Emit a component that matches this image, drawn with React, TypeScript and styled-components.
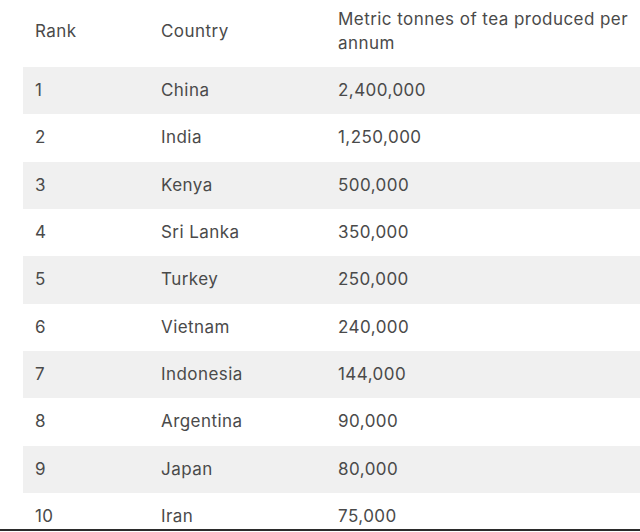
import styled, { createGlobalStyle } from 'styled-components'

const GlobalStyle = createGlobalStyle`
  html, body {
    margin: 0;
    padding: 0;
    background: #ffffff;
  }
`

type TeaRow = {
  rank: number
  country: string
  tonnes: string
}

const rows: TeaRow[] = [
  { rank: 1, country: 'China', tonnes: '2,400,000' },
  { rank: 2, country: 'India', tonnes: '1,250,000' },
  { rank: 3, country: 'Kenya', tonnes: '500,000' },
  { rank: 4, country: 'Sri Lanka', tonnes: '350,000' },
  { rank: 5, country: 'Turkey', tonnes: '250,000' },
  { rank: 6, country: 'Vietnam', tonnes: '240,000' },
  { rank: 7, country: 'Indonesia', tonnes: '144,000' },
  { rank: 8, country: 'Argentina', tonnes: '90,000' },
  { rank: 9, country: 'Japan', tonnes: '80,000' },
  { rank: 10, country: 'Iran', tonnes: '75,000' },
]

const StyledFrame = styled.div`
  box-sizing: border-box;
  height: 531px;
  overflow: hidden;
  padding-left: 23px;
  border-bottom: 2px solid #2b2b2b;
  font-family: Inter, 'Open Sans', sans-serif;
  color: #4a4a4a;
  letter-spacing: 0.45px;
`

const StyledTable = styled.table`
  width: 640px;
  border-collapse: collapse;
  table-layout: fixed;
`

const StyledHeadCell = styled.th<{ $width?: number }>`
  width: ${({ $width }) => ($width ? `${$width}px` : 'auto')};
  height: 67px;
  padding: 0 12px 5px;
  box-sizing: border-box;
  text-align: left;
  vertical-align: middle;
  font-weight: 400;
  font-size: 17px;
  line-height: 24px;
`

const StyledHeadText = styled.div`
  max-width: 300px;
`

const StyledRow = styled.tr<{ $striped: boolean }>`
  height: 47.33px;
  background: ${({ $striped }) => ($striped ? '#f0f0f0' : '#ffffff')};
`

const StyledCell = styled.td`
  padding: 0 12px 1px;
  vertical-align: middle;
  font-size: 17px;
  line-height: 24px;
`

const App = () => (
  <>
    <GlobalStyle />
    <StyledFrame>
      <StyledTable>
        <thead>
          <tr>
            <StyledHeadCell $width={126}>Rank</StyledHeadCell>
            <StyledHeadCell $width={177}>Country</StyledHeadCell>
            <StyledHeadCell>
              <StyledHeadText>Metric tonnes of tea produced per annum</StyledHeadText>
            </StyledHeadCell>
          </tr>
        </thead>
        <tbody>
          {rows.map((row, index) => (
            <StyledRow key={row.rank} $striped={index % 2 === 0}>
              <StyledCell>{row.rank}</StyledCell>
              <StyledCell>{row.country}</StyledCell>
              <StyledCell>{row.tonnes}</StyledCell>
            </StyledRow>
          ))}
        </tbody>
      </StyledTable>
    </StyledFrame>
  </>
)

export default App
